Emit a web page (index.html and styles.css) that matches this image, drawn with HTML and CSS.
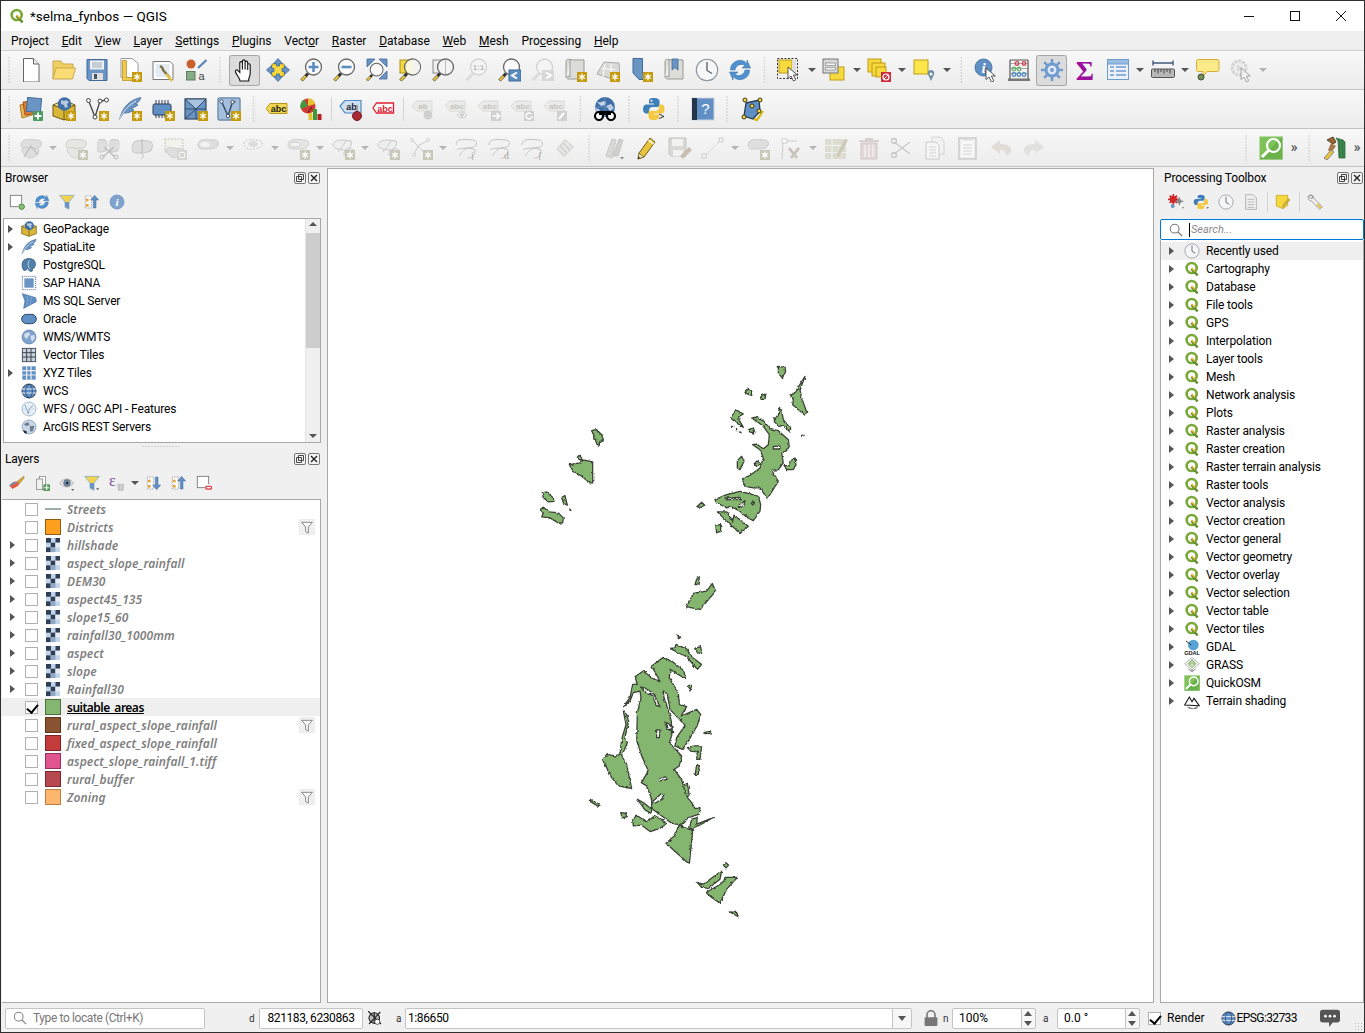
FILE: index.html
```html
<!DOCTYPE html>
<html lang="en">
<head>
  <meta charset="UTF-8">
  <title>*selma_fynbos — QGIS</title>
  <link rel="stylesheet" href="styles.css">
</head>
<body>

<!-- shared icon parts -->
<svg class="defs" width="0" height="0">
  <defs>
    <filter id="rough" x="-5%" y="-5%" width="110%" height="110%" color-interpolation-filters="sRGB">
      <feTurbulence type="fractalNoise" baseFrequency=".09" numOctaves="2" seed="4"/>
      <feDisplacementMap in="SourceGraphic" scale="9" xChannelSelector="R" yChannelSelector="G"/>
      <feGaussianBlur stdDeviation="1.200"/>
    </filter>
    <g id="badge"><rect x="14" y="14" width="10" height="10" fill="#c49b0b"/><path d="M19 15.500v7M16 17.200l6 3.600M22 17.200l-6 3.600" stroke="#fff" stroke-width="1.300"/></g>
    <g id="badge-off"><rect x="14" y="14" width="10" height="10" fill="#c9c7b8"/><path d="M19 15.500v7M16 17.200l6 3.600M22 17.200l-6 3.600" stroke="#fff" stroke-width="1.300"/></g>
    <g id="lens"><path d="M2.500 22.500L9 15.500" stroke="#333" stroke-width="3.200"/><path d="M2.800 22.200L6.500 18" stroke="#e6c33f" stroke-width="2.400"/><circle cx="14.500" cy="9" r="8" fill="#fff" fill-opacity=".7" stroke="#666" stroke-width="1.300"/></g>
    <g id="lens-off"><path d="M2.500 22.500L9 15.500" stroke="#ddd" stroke-width="3.200"/><circle cx="14.500" cy="9" r="8" fill="#f4f4f4" stroke="#d2d2d2" stroke-width="1.300"/></g>
    <g id="new"><path d="M4.500 .5h10l5.500 5.500v18h-15.500z" fill="#fff" stroke="#666"/><path d="M14.500 .5v5.500h5.500" fill="#eee" stroke="#666"/></g>
    <g id="open"><path d="M1 21V3h8l2 3h10v5" fill="#f0cf62" stroke="#c9a94c"/><path d="M1 21l3-11h19.500l-3 11z" fill="#fbdc74" stroke="#c9a94c"/></g>
    <g id="save"><path d="M2 1.500h20v21H4l-2-2z" fill="#6a94c4" stroke="#3f6a9a"/><rect x="5" y="2.500" width="14" height="9" fill="#f0f0f0"/><path d="M7 5h10M7 7h10M7 9h10" stroke="#9ab" /><rect x="7" y="15" width="11" height="7" fill="#dfdfdf"/><rect x="9" y="16" width="3" height="5" fill="#456"/></g>
    <g id="layout"><path d="M3 .5h11l6 5v14h-17z" fill="#fff" stroke="#999"/><path d="M4.500 2.500h4v17h10v3h-14z" fill="#efc94c" stroke="#b8962a" stroke-width=".8"/><use href="#badge"/></g>
    <g id="manager"><path d="M2 3.500h17l3 3v15h-20z" fill="#fff" stroke="#777"/><rect x="4.500" y="6" width="14" height="13" fill="#e3eaf2"/><path d="M9 8c2 1 3 3 3 4l7 8" stroke="#807040" stroke-width="2.400" fill="none"/><path d="M15 16l6 7" stroke="#e6c33f" stroke-width="2.400"/></g>
    <g id="style"><circle cx="7" cy="6" r="4.500" fill="#c9602d"/><rect x="2.500" y="13.500" width="8.500" height="8.500" fill="#86ad88" stroke="#5c7c5c"/><path d="M14 10l8.500-8" stroke="#5f87b8" stroke-width="2.400"/><text x="14.500" y="22" class="svg-a">a</text></g>
    <g id="pan"><path d="M6.500 21C5 18 3 16 2.500 14c-.5-1.600 1-2.700 2.200-1.600L6.800 14.500V5c0-1.800 2.600-1.800 2.600 0v6.500V3.200c0-1.800 2.700-1.800 2.700 0v8.300V4.500c0-1.800 2.600-1.800 2.600 0v7.500V7c0-1.700 2.500-1.700 2.500 0v8c0 3-1 4-1.500 6v2H7z" fill="#fff" stroke="#111" stroke-width="1.100"/></g>
    <g id="pansel"><rect x="6" y="6" width="12" height="12" fill="#f5d93d" stroke="#bf9b16"/><path d="M12 .5l4.500 5h-3v2.500h-3V5.500h-3zM12 23.500l4.500-5h-3V16h-3v2.500h-3zM.5 12l5-4.500v3H8v3H5.500v3zM23.500 12l-5-4.500v3H16v3h2.500v3z" fill="#6a94c4" stroke="#3f6a9a" stroke-width=".8"/></g>
    <g id="zin"><use href="#lens"/><path d="M14.500 4v10M9.500 9h10" stroke="#5a8cc0" stroke-width="2.600"/></g>
    <g id="zout"><use href="#lens"/><path d="M9.500 9h10" stroke="#5a8cc0" stroke-width="2.600"/></g>
    <g id="zfull"><path d="M2 1h8L2 9zM22 1h-8l8 8zM22 21h-8l8-8z" fill="#6a94c4" stroke="#3f6a9a" stroke-width=".8"/><use href="#lens" transform="translate(0 4.500) scale(.8)"/></g>
    <g id="zlayer"><rect x="2" y="2" width="13" height="13" fill="#f5d93d" stroke="#a88f20"/><path d="M2.500 22.500L9 15.500" stroke="#333" stroke-width="3.200"/><path d="M2.800 22.200L6.500 18" stroke="#e6c33f" stroke-width="2.400"/><circle cx="14.500" cy="9" r="8" fill="#fbf6dc" stroke="#666" stroke-width="1.300"/><path d="M14.500 1.500a7.500 7.500 0 0 1 0 15z" fill="#f3f3f3"/></g>
    <g id="zsel"><rect x="2" y="2" width="13" height="13" fill="#eee" stroke="#888"/><path d="M2.500 22.500L9 15.500" stroke="#333" stroke-width="3.200"/><path d="M2.800 22.200L6.500 18" stroke="#e6c33f" stroke-width="2.400"/><circle cx="14.500" cy="9" r="8" fill="#f3f3f3" stroke="#666" stroke-width="1.300"/><path d="M14.500 1.500v15" stroke="#bbb"/></g>
    <g id="z11"><use href="#lens-off"/><text x="14.500" y="12" class="svg-11">1:1</text></g>
    <g id="zlast"><use href="#lens"/><rect x="12" y="12" width="12" height="11" fill="#5a8cc0" stroke="#3f6a9a"/><path d="M20 14.500l-5 3 5 3" stroke="#fff" stroke-width="2" fill="none"/></g>
    <g id="znext"><use href="#lens-off"/><rect x="12" y="12" width="12" height="11" fill="#d8d8d8"/><path d="M16 14.500l5 3-5 3" stroke="#fff" stroke-width="2" fill="none"/></g>
    <g id="scroll"><path d="M3 3.500c0-2 2-2.500 4-2 4 1 9 0 14 .5v19H6c-2 0-3-1-3-2.500z" fill="#dcdcd8" stroke="#9a9a94"/><path d="M7 2v17c-1-1-4-1-4 0" fill="#efefec" stroke="#9a9a94"/></g>
    <g id="newmap"><use href="#scroll"/><use href="#badge"/></g>
    <g id="map3d"><path d="M1 16L8 4l15 1 1 13-8 3z" fill="#d9d9d6" stroke="#aaa"/><path d="M5 10l14 2M9 6l-2 13M15 6l0 14" stroke="#fff"/><use href="#badge"/></g>
    <g id="bmark"><path d="M4 .5h9.500V15l6 6.500H10L4 15z" fill="#6a94c4" stroke="#3f6a9a"/><use href="#badge"/></g>
    <g id="bmarks"><use href="#scroll"/><path d="M10 1h6v11l-3-2.500L10 12z" fill="#6a94c4" stroke="#3f6a9a" stroke-width=".8"/></g>
    <g id="clock"><circle cx="12" cy="12" r="10.700" fill="#f4f6f8" stroke="#8a949c" stroke-width="1.100"/><path d="M12 4v8.500l5 3" stroke="#55606a" stroke-width="1.300" fill="none"/></g>
    <g id="refresh"><path d="M2.500 12A9.500 9.500 0 0 1 19 5.500V2l3.500 8h-8.500l3-2.500A6.500 6.500 0 0 0 7 12z" fill="#4f90cf" stroke="#3d76ad" stroke-width=".6"/><path d="M21.500 12A9.500 9.500 0 0 1 5 18.500V22l-3.500-8H10l-3 2.500A6.500 6.500 0 0 0 17 12z" fill="#4f90cf" stroke="#3d76ad" stroke-width=".6"/></g>
    <g id="cursor"><path d="M0 0v11.500l3-2.500 2.500 5 2.300-1.200L5.300 8h4z" fill="#fff" stroke="#444" stroke-width=".9"/></g>
    <g id="sel"><rect x=".5" y=".5" width="20" height="20" fill="none" stroke="#333" stroke-dasharray="2 1.500"/><rect x="2" y="2" width="13" height="13" fill="#f5d93d" stroke="#bf9b16"/><rect x="15" y="2" width="4" height="17" fill="#dedede"/><use href="#cursor" x="11" y="9"/></g>
    <g id="selform"><rect x="8" y="9" width="14" height="13" fill="#f5d93d" stroke="#bf9b16"/><rect x="1" y="1" width="15" height="14" fill="#d8d8d8" stroke="#777"/><path d="M3.500 5h10v2.500h-10zM3.500 9.500h10v2.500h-10z" fill="#f4f4f4" stroke="#777" stroke-width=".6"/></g>
    <g id="desel"><rect x="1" y="1" width="13" height="13" fill="#f5d93d" stroke="#bf9b16"/><rect x="5" y="5" width="13" height="13" fill="#f5d93d" stroke="#bf9b16"/><rect x="9" y="9" width="10" height="10" fill="#f5d93d" stroke="#bf9b16"/><rect x="14" y="14" width="10" height="10" fill="#cc2c3c"/><circle cx="19" cy="19" r="3" fill="none" stroke="#fff" stroke-width="1.200"/><path d="M17 21l4-4" stroke="#fff"/></g>
    <g id="selpin"><rect x="2" y="2" width="14" height="14" fill="#fde74c" stroke="#bf9b16"/><path d="M19 12c-3.500 0-4 4-2.500 5.500L19 23l2.500-5.500C23 16 22.500 12 19 12z" fill="#6d8ea5"/><circle cx="19" cy="16" r="1.500" fill="#fff"/></g>
    <g id="identify"><circle cx="9.500" cy="9.500" r="8.500" fill="#5f8fc4" stroke="#4a78aa"/><text x="9.500" y="15" class="svg-i">i</text><use href="#cursor" x="12" y="10"/></g>
    <g id="abacus"><path d="M3 2h18M3 2v19M21 2v19M1 22h22" stroke="#555" stroke-width="1.200" fill="none"/><rect x="1" y="20.500" width="22" height="2.500" fill="#777"/><path d="M3 5.500h18M3 10.500h18M3 15.500h18" stroke="#888" stroke-width=".7"/><g fill="none" stroke-width="1.300"><g stroke="#d6394a"><circle cx="10" cy="5.500" r="1.800"/><circle cx="17" cy="5.500" r="1.800"/></g><g stroke="#66b36b"><circle cx="7" cy="11" r="1.800"/><circle cx="12" cy="11" r="1.800"/></g><g stroke="#4a86c0"><circle cx="7" cy="16.500" r="1.800"/><circle cx="12" cy="16.500" r="1.800"/><circle cx="17" cy="16.500" r="1.800"/></g></g></g>
    <g id="gear"><circle cx="12" cy="12" r="6" fill="#dfe8f3" stroke="#6f9bd0" stroke-width="3"/><circle cx="12" cy="12" r="2" fill="#6f9bd0"/><path d="M12 1v5M12 18v5M1 12h5M18 12h5M4.200 4.200l3.600 3.600M16.200 16.200l3.600 3.600M4.200 19.800l3.600-3.600M16.200 7.800l3.600-3.600" stroke="#6f9bd0" stroke-width="2.600"/></g>
    <g id="sigma"><text x="12" y="22" class="svg-sigma">Σ</text></g>
    <g id="table"><rect x="1.500" y="1.500" width="21" height="20" fill="#eaf1fa" stroke="#6f9bd0"/><rect x="1.500" y="1.500" width="21" height="4.500" fill="#9cbde2" stroke="#6f9bd0"/><path d="M4 9h4M10 9h10M4 13h4M10 13h10M4 17h4M10 17h10" stroke="#6f9bd0" stroke-width="1.300"/></g>
    <g id="ruler"><path d="M2 5h20M2 2.500v5M22 2.500v5" stroke="#40597a" stroke-width="1.400" fill="none"/><rect x=".5" y="11" width="23" height="8.500" rx="1" fill="#b8b8b8" stroke="#555"/><path d="M4 11v3M7 11v4.500M10 11v3M13 11v4.500M16 11v3M19 11v4.500" stroke="#444"/></g>
    <g id="tip"><path d="M2 1.500h19a2 2 0 0 1 2 2v8a2 2 0 0 1-2 2H11l-4 5v-5H2a1.500 1.500 0 0 1-1.500-2v-8a1.500 1.500 0 0 1 1.500-2z" fill="#fce98a" stroke="#d6ad2e"/><circle cx="5" cy="19" r="3" fill="#71944f" stroke="#444"/></g>
    <g id="tour"><circle cx="10" cy="10" r="7" fill="#eee" stroke="#d4d4d4" stroke-width="3" stroke-dasharray="3 1"/><path d="M8 6.500l6 3.500-6 3.500z" fill="#d8d8d8"/><use href="#cursor" x="12" y="10" opacity=".5"/></g>
    <g id="dsm"><path d="M1 8l13-3 2 12-13 4z" fill="#e9b451" stroke="#a87d25"/><path d="M4 5l13-1 2 12-13 2z" fill="#dc7a3a" stroke="#a2521e"/><rect x="8" y="1" width="14" height="14" transform="rotate(5 15 8)" fill="#6a94c4" stroke="#3f6a9a"/><rect x="14" y="14" width="10" height="10" rx="1" fill="#4d9a62"/><path d="M19 15.500v7M15.500 19h7" stroke="#fff" stroke-width="1.800"/></g>
    <g id="gpkg-base"><path d="M1 8l11 4 11-4v11l-11 4-11-4z" fill="#d9b638" stroke="#6e5a0f"/><path d="M12 12v11" stroke="#6e5a0f"/><path d="M1 8l11-5 11 5-11 4z" fill="#efe6a4" stroke="#6e5a0f"/><circle cx="12.500" cy="7" r="6.800" fill="#3f6fa6"/><path d="M9 3l3 1 2-1 3 2-2 2 1 3-3 1-1-3-3-1z" fill="#b7c9de"/></g>
    <g id="gpkg"><use href="#gpkg-base"/><use href="#badge"/></g>
    <g id="vertex-base"><path d="M3.500 3.500L10 20l5-16 7-1" fill="none" stroke="#444" stroke-width="1.300"/><circle cx="3.500" cy="3.500" r="2" fill="#fff" stroke="#444"/><circle cx="15" cy="4" r="2" fill="#fff" stroke="#444"/><circle cx="21.500" cy="3" r="2" fill="#fff" stroke="#444"/><circle cx="10" cy="20" r="2" fill="#fff" stroke="#444"/></g>
    <g id="vertex"><use href="#vertex-base"/><use href="#badge"/></g>
    <g id="feather-base"><path d="M1.500 22.500C4 12 10 3 23 .5 21 5 20 6 17 7l3 1c-3 2-5 3-7 3l3 2c-4 3-8 3-10.500 3z" fill="#6c94c2" stroke="#466f9e" stroke-width=".8"/><path d="M1.500 22.500C5 14 11 8 18 4" stroke="#dfe8f2" fill="none"/></g>
    <g id="feather"><use href="#feather-base"/><use href="#badge"/></g>
    <g id="chip"><rect x="2" y="7" width="18" height="11" rx="1.500" fill="#5f8fc4" stroke="#2f3f55"/><path d="M5 3v4M8 3v4M11 3v4M14 3v4M17 3v4M5 18v3M8 18v3M11 18v3M14 18v3" stroke="#2f3f55"/><use href="#badge"/></g>
    <g id="mesh"><rect x="1" y="2" width="21" height="20" fill="#6a94c4" stroke="#2f4a68" stroke-width="1.200"/><path d="M1 22l11-10M12 12v10M1 12h21M12 2v10" stroke="#2f4a68" fill="none"/><path d="M1 2h21L12 12z" fill="#a8c2df" stroke="#2f4a68"/><use href="#badge"/></g>
    <g id="virtual"><rect x="1" y="1" width="22" height="22" rx="1.500" fill="#a6bfdc" stroke="#6b8cb0" stroke-width="1.400"/><path d="M4.500 4.500L11 19l4.500-14 3-.5" fill="none" stroke="#34506e" stroke-width="1.500"/><circle cx="4.500" cy="4.500" r="1.700" fill="#fff" stroke="#34506e"/><circle cx="15.500" cy="5" r="1.700" fill="#fff" stroke="#34506e"/><circle cx="11" cy="19" r="1.700" fill="#fff" stroke="#34506e"/><use href="#badge"/></g>
    <g id="labyel"><path d="M0 11.500L4 6.500h17v10H4z" fill="#f3d650" stroke="#b8951a"/><text x="12.500" y="14.500" class="svg-abc">abc</text></g>
    <g id="diagram"><circle cx="9" cy="9" r="7.500" fill="#d43830"/><path d="M9 9V1.500A7.500 7.500 0 0 1 16.200 7z" fill="#e8c42e"/><path d="M9 9L2 12A7.500 7.500 0 0 1 5 2.500z" fill="#3f9a3f"/><path d="M9 15.500L13 10" stroke="#222"/><rect x="9.500" y="16" width="4" height="7" fill="#e8c42e"/><rect x="14" y="12" width="4" height="11" fill="#3f9a3f"/><rect x="18.500" y="17" width="4" height="6" fill="#b82020"/></g>
    <g id="labpin"><path d="M1 9L6 3.500h16V16H6z" fill="#cfe0f3" stroke="#4f8ac4" stroke-width="1.200"/><text x="12.500" y="12.500" class="svg-ab">ab</text><path d="M18 8v9" stroke="#999" stroke-width="2"/><circle cx="18" cy="19" r="4.500" fill="#a82a35" stroke="#7a1a22"/></g>
    <g id="labred"><path d="M1 11L4.500 6h17v10h-17z" fill="#fff" stroke="#e02030" stroke-width="1.300"/><text x="13" y="14.500" class="svg-abr">abc</text></g>
    <g id="lab-off"><path d="M1 9L6 4h15v10H6z" fill="#ebebe8" stroke="#d8d8d4"/><text x="13" y="12" class="svg-abo">abc</text></g>
    <g id="laboff1"><path d="M1 9L6 4h15v10H6z" fill="#ebebe8" stroke="#d8d8d4"/><text x="12" y="12" class="svg-abo">ab</text><circle cx="17" cy="18" r="4.500" fill="#cfcfcf"/></g>
    <g id="laboff2"><use href="#lab-off"/><path d="M13 18c3-4 7-4 10 0-3 4-7 4-10 0z" fill="#eee" stroke="#ccc"/><circle cx="18" cy="18" r="1.800" fill="#ccc"/></g>
    <g id="laboff3"><use href="#lab-off"/><rect x="14" y="14" width="10" height="10" fill="#d0d0d0"/><path d="M15.500 19h7m-3-3l3 3-3 3" stroke="#fff" stroke-width="1.500" fill="none"/></g>
    <g id="laboff4"><use href="#lab-off"/><rect x="14" y="14" width="10" height="10" fill="#d0d0d0"/><path d="M22 19a3 3 0 1 1-1-2.300" stroke="#fff" stroke-width="1.400" fill="none"/></g>
    <g id="laboff5"><use href="#lab-off"/><rect x="14" y="14" width="10" height="10" fill="#d0d0d0"/><path d="M16 22l5-6" stroke="#fff" stroke-width="2"/></g>
    <g id="binoc"><circle cx="12" cy="10" r="10" fill="#3f6fa6"/><path d="M4 5c3 0 4 1 6-1l3 1-1 3-4 1zM13 9l5-2 3 4-4 3zM2 11l4 1 1 2-3 1z" fill="#c5d4e6"/><path d="M2 10h20M12 0v20" stroke="#84a4c8" stroke-width=".5"/><circle cx="6" cy="19" r="4" fill="#fff" stroke="#000" stroke-width="2.200"/><circle cx="18" cy="19" r="4" fill="#fff" stroke="#000" stroke-width="2.200"/><path d="M6 14h12v4H6z" fill="#000"/></g>
    <g id="python"><path d="M11.500 1C7.500 1 7 2.500 7 4v2.500h5v1H4.500C2.500 7.500 1 9 1 12s1.500 4.500 3.500 4.500H7v-3c0-2 1.500-3.500 3.500-3.500h4.500c1.500 0 2.500-1 2.500-2.500V4c0-1.500-1.500-3-6-3z" fill="#3d7fb8"/><circle cx="9.500" cy="3.800" r="1" fill="#fff"/><path d="M11.500 23c4 0 5.500-1.500 5.500-3v-2.500h-5v-1h7.500c2 0 3-1.500 3-4.500s-1-4.500-3-4.500H17v3c0 2-1.500 3.500-3.500 3.500H9C7.500 13 6.500 14 6.500 15.500V20c0 1.500 1 3 5 3z" fill="#f4c93f"/><path d="M17 17l5 2.500-5 2" fill="none" stroke="#333"/></g>
    <g id="python-s"><path d="M11.500 1C7.500 1 7 2.500 7 4v2.500h5v1H4.500C2.500 7.500 1 9 1 12s1.500 4.500 3.500 4.500H7v-3c0-2 1.500-3.500 3.500-3.500h4.500c1.500 0 2.500-1 2.500-2.500V4c0-1.500-1.500-3-6-3z" fill="#3d7fb8"/><path d="M11.500 23c4 0 5.500-1.500 5.500-3v-2.500h-5v-1h7.500c2 0 3-1.500 3-4.500s-1-4.500-3-4.500H17v3c0 2-1.500 3.500-3.500 3.500H9C7.500 13 6.500 14 6.500 15.500V20c0 1.500 1 3 5 3z" fill="#f4c93f"/><path d="M20 20l2 2 2-2z" fill="#555"/></g>
    <g id="help"><rect x="1" y="1" width="22" height="22" fill="#5f8fc4" stroke="#c9d3de"/><rect x="1" y="1" width="5" height="22" fill="#26364a"/><text x="14.500" y="17" class="svg-help">?</text></g>
    <g id="digitize"><path d="M6 6l13-3 1 11-7 8-9-3z" fill="#5f8fc4" stroke="#2a3a4e" stroke-width="1.300"/><path d="M14 22l3 1 6-9" fill="none" stroke="#d6b600" stroke-width="2.200"/><g fill="#f5d93d" stroke="#3a3a1a"><circle cx="5" cy="3" r="2"/><circle cx="20" cy="3" r="2"/><circle cx="12" cy="9" r="2"/><circle cx="19" cy="14" r="2"/><circle cx="4" cy="20" r="2"/></g></g>
    <path id="blob" d="M2 9C2 4 7 3 12 3.500S23 3 22.500 8 15 13 11 13 2 14 2 9z"/>
    <path id="blob2" d="M3 14c0-3 5-3 8-2s9-1 9 3-6 7-9 7-8-5-8-8z"/>
    <g id="d-split"><use href="#blob" class="off"/><use href="#blob2" class="off"/><path d="M5 21l7-11 7 9" fill="none" stroke="#bbb" stroke-width="1.200"/></g>
    <g id="d-badge"><use href="#blob" class="off2"/><use href="#blob2" class="off2"/><use href="#badge-off"/></g>
    <g id="d-scissor"><use href="#blob" transform="translate(-1 -1) scale(.5 1.300)" class="off"/><use href="#blob" transform="translate(11 -1) scale(.5 1.300)" class="off"/><path d="M6 21l11-10M18 21L7 11" stroke="#bbb" stroke-width="1.200"/><circle cx="5" cy="21" r="2" fill="none" stroke="#bbb"/><circle cx="19" cy="21" r="2" fill="none" stroke="#bbb"/></g>
    <g id="d-merge"><use href="#blob" transform="scale(1 1.300)" class="off"/><path d="M12 3v9c3 2-3 4 0 6s0 4-1 5" stroke="#bbb" fill="none"/></g>
    <g id="d-part"><path d="M2 3h18v13H2z" fill="#f2f2ec" stroke="#c9c7b8" stroke-dasharray="2 1"/><use href="#blob2" class="off"/><rect x="14" y="14" width="10" height="10" fill="#d5d5d0"/><circle cx="19" cy="19" r="3" fill="none" stroke="#fff"/></g>
    <g id="d-ring"><use href="#blob" class="off"/><ellipse cx="9" cy="8.500" rx="5" ry="2.500" fill="#f4f4f4"/></g>
    <g id="d-dash"><path d="M3 8C3 4 8 3 12 4s9-1 9 4-6 4-9 5-9-1-9-5z" fill="#f4f4f4" stroke="#c6c6c6" stroke-dasharray="2 1.500"/><ellipse cx="12" cy="8" rx="5" ry="3" fill="#ddd"/></g>
    <g id="d-ringb"><use href="#blob" class="off2"/><ellipse cx="9" cy="8.500" rx="5" ry="2.500" fill="#f4f4f4" stroke="#ccc"/><use href="#badge-off"/></g>
    <g id="d-two"><path d="M2 9c0-4 6-5 10-5l8 1c2 3-2 9-6 9s-12-1-12-5z" fill="#eee" stroke="#c8c8c8"/><path d="M7 16L16 4" stroke="#ccc"/><path d="M13 16c3-3 8-5 9-2s-2 6-9 5z" fill="#f4f4f4" stroke="#c8c8c8"/></g>
    <g id="d-twob"><use href="#d-two"/><use href="#badge-off"/></g>
    <g id="d-vtx"><path d="M3 4l6 6-4 9M9 10l10-6M9 10l8 9" stroke="#ccc" fill="none"/><circle cx="3" cy="4" r="1.500" fill="#fff" stroke="#ccc"/><circle cx="19" cy="4" r="1.500" fill="#fff" stroke="#ccc"/><circle cx="5" cy="19" r="1.500" fill="#fff" stroke="#ccc"/><use href="#badge-off"/></g>
    <g id="d-reshape"><path d="M2 9C2 4 7 3 12 3.500S23 3 22.500 8c-.5 4-6 3-9 4-3 1-8 6-8 8" fill="#f2f2f2" stroke="#c4c4c4"/><path d="M3 14c1-2 14-3 18 0 0 6-3 8-7 8" fill="none" stroke="#c4c4c4"/></g>
    <g id="d-j"><use href="#d-reshape"/><text x="17" y="23" class="svg-d">j</text></g>
    <g id="d-d"><use href="#d-reshape"/><text x="17" y="23" class="svg-d">d</text></g>
    <g id="d-f"><use href="#d-reshape"/><text x="18" y="23" class="svg-d">ʃ</text></g>
    <g id="d-offset"><path d="M3 13l9-10 9 8-10 10z" fill="#d8d8d4"/><path d="M6 12l6 6M9 9l6 6M12 6l6 6" stroke="#f4f4f4" stroke-width="1.200"/></g>
    <g id="d-pencils"><path d="M4 20L10 3l4 1-4 18z" fill="#d8d8d4" stroke="#c8c8c4"/><path d="M11 20L17 3l4 1-5 16z" fill="#d0d0cc" stroke="#c8c8c4"/><path d="M18 21l4 0-2 2.500z" fill="#888"/></g>
    <g id="pencil"><path d="M3 23l1-6L15 2l5 4-11 15z" fill="#e8c43c" stroke="#6e5f1c"/><path d="M3 23l1-6 5 4z" fill="#e8dcb0" stroke="#6e5f1c" stroke-width=".7"/><path d="M3 23l.4-2.500 2 1.500z" fill="#333"/><path d="M13.500 4l5 4" stroke="#fff" stroke-width="1.500"/></g>
    <g id="d-savee"><path d="M1 2h17v18H3l-2-2z" fill="#d8d8d4" stroke="#c4c4c0"/><rect x="4" y="3" width="11" height="7" fill="#f2f2f0"/><rect x="5" y="14" width="10" height="6" fill="#f2f2f0"/><path d="M12 20l9-9 3 3-9 9z" fill="#c8bdb0"/></g>
    <g id="d-line"><path d="M4 20L20 4" stroke="#d0d0d0" stroke-dasharray="3 1"/><rect x="1" y="18" width="4" height="4" fill="#f4f4f4" stroke="#ccc"/><rect x="18" y="2" width="4" height="4" fill="#f4f4f4" stroke="#ccc"/></g>
    <g id="d-ringbb"><use href="#blob" class="off"/><use href="#badge-off"/></g>
    <g id="d-tool"><path d="M3 3h5v4H3z" fill="#fff" stroke="#ccc"/><path d="M8 5h10M4 7l-1 16" stroke="#ccc"/><path d="M10 12l8 10M20 12l-8 10" stroke="#c8c2b8" stroke-width="2.800"/></g>
    <g id="d-attr"><rect x="1" y="3" width="21" height="6" fill="#dcdcd0"/><rect x="1" y="10" width="21" height="6" fill="#dcdcd0"/><rect x="1" y="17" width="21" height="6" fill="#dcdcd0"/><path d="M8 3v20" stroke="#f4f4f4"/><path d="M12 20L21 3l3 1-9 17z" fill="#cfc8b8"/></g>
    <g id="d-trash"><path d="M2 4h20v2H2zM8 2h8v2H8z" fill="#d8cfcf"/><path d="M4 7h16v16H4z" fill="#e2d8d8" stroke="#cfc6c6"/><path d="M8 9v12M12 9v12M16 9v12" stroke="#f4f0f0" stroke-width="1.400"/></g>
    <g id="d-cut"><path d="M4 6l16 12M4 18L20 6" stroke="#c8c8c8" stroke-width="1.200"/><circle cx="4" cy="5" r="2.500" fill="none" stroke="#c8c8c8" stroke-width="1.400"/><circle cx="4" cy="19" r="2.500" fill="none" stroke="#c8c8c8" stroke-width="1.400"/></g>
    <g id="d-copy"><path d="M9 1h8l4 4v13H9z" fill="#f2f2f2" stroke="#d2d2d2"/><path d="M3 6h10l3 3v14H3z" fill="#f6f6f6" stroke="#cacaca"/><path d="M6 11h7M6 14h7M6 17h7M6 20h7" stroke="#d2d2d2"/></g>
    <g id="d-paste"><rect x="3" y="2" width="17" height="21" fill="#ececec" stroke="#cacaca" stroke-width="1.400"/><rect x="5" y="5" width="13" height="16" fill="#f8f8f8"/><rect x="8" y="1" width="7" height="3" fill="#d8d8d8"/><path d="M7 9h9M7 12h9M7 15h9M7 18h9" stroke="#d2d2d2"/></g>
    <g id="d-undo"><path d="M11 4L2 11l9 7v-4c4 0 6 1 6 6 3-2 5-3 5-6 0-4-4-6-11-6z" fill="#e1dcd8"/></g>
    <g id="d-redo"><path d="M13 4l9 7-9 7v-4c-4 0-6 1-6 6-3-2-5-3-5-6 0-4 4-6 11-6z" fill="#e1e1de"/></g>
    <g id="osm"><rect x=".5" y=".5" width="23" height="23" fill="#7fc25a"/><path d="M.5 23.500L23.500 .5v23z" fill="#5ea63f" opacity=".6"/><circle cx="14.500" cy="9.500" r="6.500" fill="none" stroke="#fff" stroke-width="2.200"/><path d="M10 14l-7 7" stroke="#fff" stroke-width="3"/></g>
    <g id="hammer"><path d="M14 2l2 3 1 17h6V6l-2-2zM17 4l1 18M20 4l1 18" fill="#3f8a50" stroke="#2f6a3c" stroke-width=".8"/><path d="M5 4l6-3 3 5-3 2z" fill="#9a6a3c" stroke="#5a3c20"/><path d="M9 7l5 3L9 17 6 14z" fill="#a57a4a"/><path d="M2 22l7-8 3 2-7 8z" fill="#e8c43c" stroke="#888"/></g>
    <g id="qlogo"><circle cx="11.500" cy="10.500" r="7.500" fill="#fff" stroke="#7aa83a" stroke-width="4"/><path d="M11 12l9.500 9.500" stroke="#5f8e2a" stroke-width="3.600"/><path d="M11.500 10.500l5 5" stroke="#e7b83a" stroke-width="2.400"/></g>

    <!-- tree and panel icons -->
    <g id="pg"><path d="M4 20c-4-7-3-16 4-17 2-1 6-1 8 0 6 1 7 9 4 13-2 1-3 2-3 5-3 2-6 0-6-5-1 2-4 5-7 4z" fill="#4f7faa" stroke="#2e5374" stroke-width="1.100"/><path d="M13 5c-3 3-3 9 0 13" stroke="#fff" fill="none"/></g>
    <g id="hana"><rect x="5" y="5" width="14" height="14" fill="#6a94c4"/><rect x="2" y="2" width="20" height="20" fill="none" stroke="#4c6c90" stroke-dasharray="1.500 1.500" stroke-width="1.500"/></g>
    <g id="mssql"><path d="M2 1l20 6 1 6-19 10 2-11z" fill="#5f8fc4" stroke="#3f6a9a"/><path d="M10 4l-1 15M16 6l-3 12" stroke="#90b0d4"/></g>
    <g id="oracle"><rect x="1" y="5" width="22" height="14" rx="7" fill="#5f8fc4" stroke="#27405e" stroke-width="1.400"/></g>
    <g id="globe"><circle cx="12" cy="12" r="10.500" fill="#7fa3cc" stroke="#4f76a4"/><path d="M5 7l6-2 3 3-3 3-2 4-4-3zM14 10l6-1 1 5-4 5-2-3z" fill="#d3dfee"/></g>
    <g id="tiles"><rect x="2" y="2" width="20" height="20" fill="#c8d2dd" stroke="#3a4550" stroke-width="1.300"/><path d="M2 8.500h20M2 15h20M8.500 2v20M15 2v20" stroke="#3a4550" stroke-width="1.500"/></g>
    <g id="xyz"><rect x="2" y="2" width="20" height="20" fill="#5f8fc4"/><path d="M2 8.500h20M2 15h20M8.500 2v20M15 2v20" stroke="#f0f0f0" stroke-width="1.800"/></g>
    <g id="wcs"><circle cx="12" cy="12" r="10.500" fill="#5f8fc4" stroke="#22354e" stroke-width="1.300"/><path d="M1.500 9h21M1.500 15h21" stroke="#fff" stroke-width="1.300"/><ellipse cx="12" cy="12" rx="5" ry="10" fill="none" stroke="#22354e"/></g>
    <g id="wfs"><circle cx="12" cy="12" r="10.500" fill="#e8eff7" stroke="#7f9fc4"/><path d="M6 6l5 13 2-8 5-4" fill="none" stroke="#5a7a9c"/><path d="M1.500 12h21" stroke="#c0d0e2"/></g>
    <g id="arcgis"><circle cx="12" cy="12" r="10.500" fill="#c9d6e6" stroke="#6f8fb4"/><path d="M4 8l6-3 3 3-4 3zM13 11l7-1-2 8-4 1z" fill="#6b7a8c"/><path d="M3 17l5 1 1 4-4-1z" fill="#223"/></g>
    <g id="addgrp"><rect x="2" y="2" width="17" height="17" fill="#fff" stroke="#777" stroke-width="1.300"/><rect x="14" y="14" width="10" height="10" fill="#fff"/><circle cx="19" cy="19" r="4.200" fill="#8bbd7a" stroke="#4f8a40" stroke-width="1.500"/></g>
    <g id="filter"><path d="M1 2h22L15 12v11l-6-3v-8z" fill="#f3d24e" stroke="#80a8d0" stroke-width="1.100"/><path d="M9 12h6v10l-6-3z" fill="#6a94c4"/></g>
    <g id="collapse"><rect x="2" y="3" width="9" height="18" fill="#fff" stroke="#888" stroke-dasharray="2 1"/><rect x="3" y="7" width="4" height="4" fill="#e8a53a"/><rect x="3" y="15" width="4" height="4" fill="#e8a53a"/><path d="M16 2l6 7h-4v12h-4V9h-4z" fill="#5f8fc4" stroke="#3f6a9a" stroke-width=".7"/></g>
    <g id="expand"><rect x="2" y="3" width="9" height="18" fill="#fff" stroke="#888" stroke-dasharray="2 1"/><rect x="3" y="7" width="4" height="4" fill="#e8a53a"/><rect x="3" y="15" width="4" height="4" fill="#e8a53a"/><path d="M16 22l6-7h-4V3h-4v12h-4z" fill="#5f8fc4" stroke="#3f6a9a" stroke-width=".7"/></g>
    <g id="info"><circle cx="12" cy="12" r="10.500" fill="#7fa3cc" stroke="#5f88b8"/><text x="12" y="18" class="svg-inf">i</text></g>
    <g id="brush"><path d="M12 10L22 2l1 2-8 10z" fill="#d9a83a" stroke="#8a6a1c" stroke-width=".7"/><path d="M1 16c4-6 10-8 14-4l-1 4-9 5z" fill="#e35a40"/><path d="M1 16c3-3 8-5 11-4" stroke="#6a94c4" stroke-width="2" fill="none"/></g>
    <g id="addlegend"><rect x="8" y="2" width="9" height="18" fill="#fff" stroke="#777"/><rect x="4" y="6" width="9" height="16" fill="#f2f2f2" stroke="#777"/><rect x="14" y="14" width="10" height="10" fill="#5a9c60"/><path d="M19 15.500v7M15.500 19h7" stroke="#fff" stroke-width="1.600"/></g>
    <g id="eye"><path d="M1 12c6-8 15-8 21 0-6 8-15 8-21 0z" fill="#e8e8e8" stroke="#999"/><circle cx="12" cy="12" r="5" fill="#6f90b4" stroke="#555"/><circle cx="12" cy="12" r="2" fill="#223"/><path d="M18 21l5 0-2.500 2.500z" fill="#555"/></g>
    <g id="filter-d"><use href="#filter"/><path d="M18 20l5 0-2.500 2.500z" fill="#555"/></g>
    <g id="eps"><text x="0" y="17" class="svg-eps">ε</text><path d="M13 14h9l-1 9h-7z" fill="#ddd" stroke="#aaa"/><path d="M16 15v7M19 15v7" stroke="#aaa"/></g>
    <g id="remove"><rect x="2" y="2" width="17" height="17" fill="#fff" stroke="#777" stroke-width="1.300"/><rect x="14" y="14" width="10" height="9" fill="#fff"/><rect x="14" y="16" width="10" height="6" rx="1.500" fill="#dd4450"/><rect x="16" y="18" width="6" height="2" fill="#fff"/></g>
    <g id="procgear"><circle cx="8" cy="8" r="5.500" fill="#d02828"/><path d="M8 0v16M0 8h16M2.500 2.500l11 11M2.500 13.500l11-11" stroke="#d02828" stroke-width="2.400"/><circle cx="17" cy="11" r="3.500" fill="#888"/><path d="M17 5v12M11 11h12" stroke="#888" stroke-width="1.800"/><circle cx="7" cy="18" r="3" fill="#6a94c4"/><path d="M21 20l3 0-1.500 2z" fill="#555"/></g>
    <g id="doc"><path d="M4 1h11l5 5v17H4z" fill="#f0f0f0" stroke="#aaa" stroke-width="1.300"/><path d="M7 8h10M7 12h10M7 16h10M7 20h10" stroke="#aaa" stroke-width="1.200"/></g>
    <g id="note"><path d="M2 2h17v15l-7 5-10-4z" fill="#f5d93d" stroke="#bf9b16"/><path d="M11 22l12-13-3-3-9 11z" fill="#c8a83a"/></g>
    <g id="wrench"><path d="M3 2c3-1 7 0 7 4l13 13-4 4L6 10C2 10 1 6 2 3l4 4 3-1 0-3z" fill="#f0f0f0" stroke="#777"/><path d="M15 15l6 6" stroke="#e6c33f" stroke-width="3"/></g>
    <g id="gdal"><circle cx="14" cy="9" r="8" fill="#58a3d6"/><path d="M3 3l8 6" stroke="#333" stroke-width="1.500"/><text x="12" y="23.500" class="svg-gdal">GDAL</text></g>
    <g id="grass"><path d="M12 1l11 9-11 9L1 10z" fill="#fff" stroke="#888"/><path d="M12 4l6 6-6 6-6-6z" fill="#9ac47a" stroke="#5a8a40"/><path d="M12 6v9M8 10l4 4 4-4" stroke="#fff" fill="none"/><path d="M4 17l8 6 8-6-8 3z" fill="#999"/></g>
    <g id="terrain"><path d="M1 18l7-12 4 7 3-5 8 11z" fill="#fff" stroke="#111" stroke-width="1.600"/><path d="M4 20l10 3 9-5-4 6H8z" fill="#888"/></g>
    <g id="funnel"><rect x=".5" y=".5" width="23" height="23" rx="2" fill="#f0f0f0" stroke="#e4e4e4"/><path d="M4 5h16l-6 7v9l-4-2v-7z" fill="#fff" stroke="#777" stroke-width="1.300"/></g>
    <g id="raster"><rect x="0" y="0" width="14" height="14" fill="#c3d3e8"/><rect x="0" y="0" width="5" height="4.700" fill="#2f3f55"/><rect x="9.500" y="0" width="4.500" height="4.700" fill="#2f3f55"/><rect x="4.700" y="4.700" width="4.700" height="4.700" fill="#2f3f55"/><rect x="0" y="9.400" width="4.700" height="4.700" fill="#2f3f55"/><rect x="9.400" y="4.700" width="4.700" height="4.700" fill="#e8eef6"/><rect x="4.700" y="9.400" width="4.700" height="4.700" fill="#8fa8c8"/></g>
    <g id="lock"><path d="M5 10V6a5 5 0 0 1 10 0v4" fill="none" stroke="#777" stroke-width="2"/><rect x="2" y="9" width="16" height="11" rx="1" fill="#777"/></g>
    <g id="bug"><circle cx="11" cy="12" r="7" fill="#bbb" stroke="#222" stroke-width="1.500"/><path d="M3 3l17 17M4 20L19 4M11 4v16" stroke="#222" stroke-width="1.500"/><circle cx="15" cy="17" r="3.500" fill="#fff" stroke="#222"/></g>
    <g id="msg"><path d="M3 2h16a3 3 0 0 1 3 3v8a3 3 0 0 1-3 3h-5l-4 5v-5H3a3 3 0 0 1-3-3V5a3 3 0 0 1 3-3z" fill="#555"/><circle cx="6" cy="9" r="1.500" fill="#fff"/><circle cx="11" cy="9" r="1.500" fill="#fff"/><circle cx="16" cy="9" r="1.500" fill="#fff"/></g>
    <g id="float"><rect x=".5" y=".5" width="11" height="11" rx="1.500" fill="#f4f4f4" stroke="#777"/><path d="M4.500 2.500h5v5h-5zM2.500 4.500h5v5h-5z" fill="none" stroke="#333" stroke-width=".9"/></g>
    <g id="close"><rect x=".5" y=".5" width="11" height="11" rx="1.500" fill="#f4f4f4" stroke="#777"/><path d="M3 3l6 6M9 3L3 9" stroke="#222" stroke-width="1.400"/></g>
  </defs>
</svg>

<div class="window">

  <header class="titlebar">
    <svg class="title-logo" viewBox="0 0 24 24"><use href="#qlogo"/></svg>
    <span class="title-text">*selma_fynbos — QGIS</span>
    <div class="winctl">
      <svg viewBox="0 0 12 12"><path d="M1 6.500h10" stroke="#111" fill="none"/></svg>
      <svg viewBox="0 0 12 12"><rect x="1.500" y="1.500" width="9" height="9" fill="none" stroke="#111"/></svg>
      <svg viewBox="0 0 12 12"><path d="M1 1l10 10M11 1L1 11" stroke="#111" fill="none"/></svg>
    </div>
  </header>

  <nav class="menubar">
    <span>Pro<u>j</u>ect</span><span><u>E</u>dit</span><span><u>V</u>iew</span><span><u>L</u>ayer</span><span><u>S</u>ettings</span><span><u>P</u>lugins</span><span>Vect<u>o</u>r</span><span><u>R</u>aster</span><span><u>D</u>atabase</span><span><u>W</u>eb</span><span><u>M</u>esh</span><span>Pro<u>c</u>essing</span><span><u>H</u>elp</span>
  </nav>

  <div class="toolbar">
    <i class="grip"></i>
    <span class="btn"><svg class="ic" viewBox="0 0 24 24"><use href="#new"/></svg></span>
    <span class="btn"><svg class="ic" viewBox="0 0 24 24"><use href="#open"/></svg></span>
    <span class="btn"><svg class="ic" viewBox="0 0 24 24"><use href="#save"/></svg></span>
    <span class="btn"><svg class="ic" viewBox="0 0 24 24"><use href="#layout"/></svg></span>
    <span class="btn"><svg class="ic" viewBox="0 0 24 24"><use href="#manager"/></svg></span>
    <span class="btn"><svg class="ic" viewBox="0 0 24 24"><use href="#style"/></svg></span>
    <i class="grip"></i>
    <span class="btn active"><svg class="ic" viewBox="0 0 24 24"><use href="#pan"/></svg></span>
    <span class="btn"><svg class="ic" viewBox="0 0 24 24"><use href="#pansel"/></svg></span>
    <span class="btn"><svg class="ic" viewBox="0 0 24 24"><use href="#zin"/></svg></span>
    <span class="btn"><svg class="ic" viewBox="0 0 24 24"><use href="#zout"/></svg></span>
    <span class="btn"><svg class="ic" viewBox="0 0 24 24"><use href="#zfull"/></svg></span>
    <span class="btn"><svg class="ic" viewBox="0 0 24 24"><use href="#zlayer"/></svg></span>
    <span class="btn"><svg class="ic" viewBox="0 0 24 24"><use href="#zsel"/></svg></span>
    <span class="btn"><svg class="ic" viewBox="0 0 24 24"><use href="#z11"/></svg></span>
    <span class="btn"><svg class="ic" viewBox="0 0 24 24"><use href="#zlast"/></svg></span>
    <span class="btn"><svg class="ic" viewBox="0 0 24 24"><use href="#znext"/></svg></span>
    <span class="btn"><svg class="ic" viewBox="0 0 24 24"><use href="#newmap"/></svg></span>
    <span class="btn"><svg class="ic" viewBox="0 0 24 24"><use href="#map3d"/></svg></span>
    <span class="btn"><svg class="ic" viewBox="0 0 24 24"><use href="#bmark"/></svg></span>
    <span class="btn"><svg class="ic" viewBox="0 0 24 24"><use href="#bmarks"/></svg></span>
    <span class="btn"><svg class="ic" viewBox="0 0 24 24"><use href="#clock"/></svg></span>
    <span class="btn"><svg class="ic" viewBox="0 0 24 24"><use href="#refresh"/></svg></span>
    <i class="grip wide"></i>
    <span class="btn"><svg class="ic" viewBox="0 0 24 24"><use href="#sel"/></svg></span><b class="drop"></b>
    <span class="btn"><svg class="ic" viewBox="0 0 24 24"><use href="#selform"/></svg></span><b class="drop"></b>
    <span class="btn"><svg class="ic" viewBox="0 0 24 24"><use href="#desel"/></svg></span><b class="drop"></b>
    <span class="btn"><svg class="ic" viewBox="0 0 24 24"><use href="#selpin"/></svg></span><b class="drop"></b>
    <i class="grip wide"></i>
    <span class="btn"><svg class="ic" viewBox="0 0 24 24"><use href="#identify"/></svg></span>
    <span class="btn"><svg class="ic" viewBox="0 0 24 24"><use href="#abacus"/></svg></span>
    <span class="btn active"><svg class="ic" viewBox="0 0 24 24"><use href="#gear"/></svg></span>
    <span class="btn"><svg class="ic" viewBox="0 0 24 24"><use href="#sigma"/></svg></span>
    <span class="btn"><svg class="ic" viewBox="0 0 24 24"><use href="#table"/></svg></span><b class="drop"></b>
    <span class="btn"><svg class="ic" viewBox="0 0 24 24"><use href="#ruler"/></svg></span><b class="drop"></b>
    <span class="btn"><svg class="ic" viewBox="0 0 24 24"><use href="#tip"/></svg></span>
    <span class="btn"><svg class="ic" viewBox="0 0 24 24"><use href="#tour"/></svg></span><b class="drop off-drop"></b>
  </div>

  <div class="toolbar">
    <i class="grip"></i>
    <span class="btn"><svg class="ic" viewBox="0 0 24 24"><use href="#dsm"/></svg></span>
    <span class="btn"><svg class="ic" viewBox="0 0 24 24"><use href="#gpkg"/></svg></span>
    <span class="btn"><svg class="ic" viewBox="0 0 24 24"><use href="#vertex"/></svg></span>
    <span class="btn"><svg class="ic" viewBox="0 0 24 24"><use href="#feather"/></svg></span>
    <span class="btn"><svg class="ic" viewBox="0 0 24 24"><use href="#chip"/></svg></span>
    <span class="btn"><svg class="ic" viewBox="0 0 24 24"><use href="#mesh"/></svg></span>
    <span class="btn"><svg class="ic" viewBox="0 0 24 24"><use href="#virtual"/></svg></span>
    <i class="grip wide"></i>
    <span class="btn"><svg class="ic" viewBox="0 0 24 24"><use href="#labyel"/></svg></span>
    <span class="btn"><svg class="ic" viewBox="0 0 24 24"><use href="#diagram"/></svg></span>
    <i class="sep"></i>
    <span class="btn"><svg class="ic" viewBox="0 0 24 24"><use href="#labpin"/></svg></span>
    <span class="btn"><svg class="ic" viewBox="0 0 24 24"><use href="#labred"/></svg></span>
    <i class="sep"></i>
    <span class="btn"><svg class="ic" viewBox="0 0 24 24"><use href="#laboff1"/></svg></span>
    <span class="btn"><svg class="ic" viewBox="0 0 24 24"><use href="#laboff2"/></svg></span>
    <span class="btn"><svg class="ic" viewBox="0 0 24 24"><use href="#laboff3"/></svg></span>
    <span class="btn"><svg class="ic" viewBox="0 0 24 24"><use href="#laboff4"/></svg></span>
    <span class="btn"><svg class="ic" viewBox="0 0 24 24"><use href="#laboff5"/></svg></span>
    <i class="grip wide"></i>
    <span class="btn"><svg class="ic" viewBox="0 0 24 24"><use href="#binoc"/></svg></span>
    <i class="grip"></i>
    <span class="btn"><svg class="ic" viewBox="0 0 24 24"><use href="#python"/></svg></span>
    <i class="grip"></i>
    <span class="btn"><svg class="ic" viewBox="0 0 24 24"><use href="#help"/></svg></span>
    <i class="grip"></i>
    <span class="btn"><svg class="ic" viewBox="0 0 24 24"><use href="#digitize"/></svg></span>
  </div>

  <div class="toolbar last">
    <i class="grip"></i>
    <span class="btn"><svg class="ic" viewBox="0 0 24 24"><use href="#d-split"/></svg></span><b class="drop off-drop"></b>
    <span class="btn"><svg class="ic" viewBox="0 0 24 24"><use href="#d-badge"/></svg></span>
    <span class="btn"><svg class="ic" viewBox="0 0 24 24"><use href="#d-scissor"/></svg></span>
    <span class="btn"><svg class="ic" viewBox="0 0 24 24"><use href="#d-merge"/></svg></span>
    <span class="btn"><svg class="ic" viewBox="0 0 24 24"><use href="#d-part"/></svg></span>
    <span class="btn"><svg class="ic" viewBox="0 0 24 24"><use href="#d-ring"/></svg></span><b class="drop off-drop"></b>
    <span class="btn"><svg class="ic" viewBox="0 0 24 24"><use href="#d-dash"/></svg></span><b class="drop off-drop"></b>
    <span class="btn"><svg class="ic" viewBox="0 0 24 24"><use href="#d-ringb"/></svg></span><b class="drop off-drop"></b>
    <span class="btn"><svg class="ic" viewBox="0 0 24 24"><use href="#d-twob"/></svg></span><b class="drop off-drop"></b>
    <span class="btn"><svg class="ic" viewBox="0 0 24 24"><use href="#d-twob"/></svg></span>
    <span class="btn"><svg class="ic" viewBox="0 0 24 24"><use href="#d-vtx"/></svg></span><b class="drop off-drop"></b>
    <span class="btn"><svg class="ic" viewBox="0 0 24 24"><use href="#d-j"/></svg></span>
    <span class="btn"><svg class="ic" viewBox="0 0 24 24"><use href="#d-d"/></svg></span>
    <span class="btn"><svg class="ic" viewBox="0 0 24 24"><use href="#d-f"/></svg></span>
    <span class="btn"><svg class="ic" viewBox="0 0 24 24"><use href="#d-offset"/></svg></span>
    <i class="grip"></i>
    <span class="btn"><svg class="ic" viewBox="0 0 24 24"><use href="#d-pencils"/></svg></span>
    <span class="btn"><svg class="ic" viewBox="0 0 24 24"><use href="#pencil"/></svg></span>
    <span class="btn"><svg class="ic" viewBox="0 0 24 24"><use href="#d-savee"/></svg></span>
    <span class="btn"><svg class="ic" viewBox="0 0 24 24"><use href="#d-line"/></svg></span><b class="drop off-drop"></b>
    <span class="btn"><svg class="ic" viewBox="0 0 24 24"><use href="#d-ringbb"/></svg></span>
    <span class="btn"><svg class="ic" viewBox="0 0 24 24"><use href="#d-tool"/></svg></span><b class="drop off-drop"></b>
    <span class="btn"><svg class="ic" viewBox="0 0 24 24"><use href="#d-attr"/></svg></span>
    <span class="btn"><svg class="ic" viewBox="0 0 24 24"><use href="#d-trash"/></svg></span>
    <span class="btn"><svg class="ic" viewBox="0 0 24 24"><use href="#d-cut"/></svg></span>
    <span class="btn"><svg class="ic" viewBox="0 0 24 24"><use href="#d-copy"/></svg></span>
    <span class="btn"><svg class="ic" viewBox="0 0 24 24"><use href="#d-paste"/></svg></span>
    <span class="btn"><svg class="ic" viewBox="0 0 24 24"><use href="#d-undo"/></svg></span>
    <span class="btn"><svg class="ic" viewBox="0 0 24 24"><use href="#d-redo"/></svg></span>
    <i class="grip push"></i>
    <span class="btn"><svg class="ic" viewBox="0 0 24 24"><use href="#osm"/></svg></span>
    <span class="more">»</span>
    <i class="grip"></i>
    <span class="btn"><svg class="ic" viewBox="0 0 24 24"><use href="#hammer"/></svg></span>
    <span class="more">»</span>
  </div>

  <main class="workspace">

    <aside class="left-dock">
      <section class="panel browser">
        <div class="panel-title">
          <span>Browser</span>
          <svg class="dock-btn" viewBox="0 0 12 12"><use href="#float"/></svg>
          <svg class="dock-btn" viewBox="0 0 12 12"><use href="#close"/></svg>
        </div>
        <div class="panel-tools">
          <span class="pbtn"><svg class="ics" viewBox="0 0 24 24"><use href="#addgrp"/></svg></span>
          <span class="pbtn"><svg class="ics" viewBox="0 0 24 24"><use href="#refresh"/></svg></span>
          <span class="pbtn"><svg class="ics" viewBox="0 0 24 24"><use href="#filter"/></svg></span>
          <span class="pbtn"><svg class="ics" viewBox="0 0 24 24"><use href="#collapse"/></svg></span>
          <span class="pbtn"><svg class="ics" viewBox="0 0 24 24"><use href="#info"/></svg></span>
        </div>
        <div class="browser-tree">
          <ul class="tree">
            <li><i class="arrow"></i><svg class="ics" viewBox="0 0 24 24"><use href="#gpkg-base"/></svg><span>GeoPackage</span></li>
            <li><i class="arrow"></i><svg class="ics" viewBox="0 0 24 24"><use href="#feather-base"/></svg><span>SpatiaLite</span></li>
            <li><i class="noarrow"></i><svg class="ics" viewBox="0 0 24 24"><use href="#pg"/></svg><span>PostgreSQL</span></li>
            <li><i class="noarrow"></i><svg class="ics" viewBox="0 0 24 24"><use href="#hana"/></svg><span>SAP HANA</span></li>
            <li><i class="noarrow"></i><svg class="ics" viewBox="0 0 24 24"><use href="#mssql"/></svg><span>MS SQL Server</span></li>
            <li><i class="noarrow"></i><svg class="ics" viewBox="0 0 24 24"><use href="#oracle"/></svg><span>Oracle</span></li>
            <li><i class="noarrow"></i><svg class="ics" viewBox="0 0 24 24"><use href="#globe"/></svg><span>WMS/WMTS</span></li>
            <li><i class="noarrow"></i><svg class="ics" viewBox="0 0 24 24"><use href="#tiles"/></svg><span>Vector Tiles</span></li>
            <li><i class="arrow"></i><svg class="ics" viewBox="0 0 24 24"><use href="#xyz"/></svg><span>XYZ Tiles</span></li>
            <li><i class="noarrow"></i><svg class="ics" viewBox="0 0 24 24"><use href="#wcs"/></svg><span>WCS</span></li>
            <li><i class="noarrow"></i><svg class="ics" viewBox="0 0 24 24"><use href="#wfs"/></svg><span>WFS / OGC API - Features</span></li>
            <li><i class="noarrow"></i><svg class="ics" viewBox="0 0 24 24"><use href="#arcgis"/></svg><span>ArcGIS REST Servers</span></li>
          </ul>
          <div class="scrollbar">
            <i class="sb-up"></i>
            <i class="sb-thumb"></i>
            <i class="sb-down"></i>
          </div>
        </div>
      </section>

      <div class="splitter"></div>

      <section class="panel layers">
        <div class="panel-title">
          <span>Layers</span>
          <svg class="dock-btn" viewBox="0 0 12 12"><use href="#float"/></svg>
          <svg class="dock-btn" viewBox="0 0 12 12"><use href="#close"/></svg>
        </div>
        <div class="panel-tools">
          <span class="pbtn"><svg class="ics" viewBox="0 0 24 24"><use href="#brush"/></svg></span>
          <span class="pbtn"><svg class="ics" viewBox="0 0 24 24"><use href="#addlegend"/></svg></span>
          <span class="pbtn"><svg class="ics" viewBox="0 0 24 24"><use href="#eye"/></svg></span>
          <span class="pbtn"><svg class="ics" viewBox="0 0 24 24"><use href="#filter-d"/></svg></span>
          <span class="pbtn"><svg class="ics" viewBox="0 0 24 24"><use href="#eps"/></svg></span><b class="drop small"></b>
          <span class="pbtn"><svg class="ics" viewBox="0 0 24 24"><use href="#expand"/></svg></span>
          <span class="pbtn"><svg class="ics" viewBox="0 0 24 24"><use href="#collapse"/></svg></span>
          <span class="pbtn"><svg class="ics" viewBox="0 0 24 24"><use href="#remove"/></svg></span>
        </div>
        <ul class="tree layer-tree">
          <li><i class="noarrow"></i><i class="check"></i><span class="sym"><i class="sym-line"></i></span><span>Streets</span></li>
          <li><i class="noarrow"></i><i class="check"></i><span class="sym"><i class="swatch orange"></i></span><span>Districts</span><svg class="funnel" viewBox="0 0 24 24"><use href="#funnel"/></svg></li>
          <li><i class="arrow"></i><i class="check"></i><svg class="sym" viewBox="-1 -1 16 16"><use href="#raster"/></svg><span>hillshade</span></li>
          <li><i class="arrow"></i><i class="check"></i><svg class="sym" viewBox="-1 -1 16 16"><use href="#raster"/></svg><span>aspect_slope_rainfall</span></li>
          <li><i class="arrow"></i><i class="check"></i><svg class="sym" viewBox="-1 -1 16 16"><use href="#raster"/></svg><span>DEM30</span></li>
          <li><i class="arrow"></i><i class="check"></i><svg class="sym" viewBox="-1 -1 16 16"><use href="#raster"/></svg><span>aspect45_135</span></li>
          <li><i class="arrow"></i><i class="check"></i><svg class="sym" viewBox="-1 -1 16 16"><use href="#raster"/></svg><span>slope15_60</span></li>
          <li><i class="arrow"></i><i class="check"></i><svg class="sym" viewBox="-1 -1 16 16"><use href="#raster"/></svg><span>rainfall30_1000mm</span></li>
          <li><i class="arrow"></i><i class="check"></i><svg class="sym" viewBox="-1 -1 16 16"><use href="#raster"/></svg><span>aspect</span></li>
          <li><i class="arrow"></i><i class="check"></i><svg class="sym" viewBox="-1 -1 16 16"><use href="#raster"/></svg><span>slope</span></li>
          <li><i class="arrow"></i><i class="check"></i><svg class="sym" viewBox="-1 -1 16 16"><use href="#raster"/></svg><span>Rainfall30</span></li>
          <li class="current"><i class="noarrow"></i><i class="check on"></i><span class="sym"><i class="swatch green"></i></span><span>suitable_areas</span></li>
          <li><i class="noarrow"></i><i class="check"></i><span class="sym"><i class="swatch brown"></i></span><span>rural_aspect_slope_rainfall</span><svg class="funnel" viewBox="0 0 24 24"><use href="#funnel"/></svg></li>
          <li><i class="noarrow"></i><i class="check"></i><span class="sym"><i class="swatch red"></i></span><span>fixed_aspect_slope_rainfall</span></li>
          <li><i class="noarrow"></i><i class="check"></i><span class="sym"><i class="swatch pink"></i></span><span>aspect_slope_rainfall_1.tiff</span></li>
          <li><i class="noarrow"></i><i class="check"></i><span class="sym"><i class="swatch rose"></i></span><span>rural_buffer</span></li>
          <li><i class="noarrow"></i><i class="check"></i><span class="sym"><i class="swatch peach"></i></span><span>Zoning</span><svg class="funnel" viewBox="0 0 24 24"><use href="#funnel"/></svg></li>
        </ul>
      </section>
    </aside>

    <section class="map-canvas">
      <svg class="map" viewBox="328 169 825 834" preserveAspectRatio="none">
        <g class="land" filter="url(#rough)" transform="translate(530 355) scale(.33333)">
          <path d="M745 35 765 38 767 50 757 70 745 55Z"/>
          <path d="M825 65 803 100 797 112 782 122 790 135 788 150 805 165 825 182 830 172 815 130 810 105Z"/>
          <path d="M645 113 655 102 665 108 665 122 653 118Z"/>
          <path d="M692 122 707 118 705 135 697 135Z"/>
          <path d="M602 190 618 165 630 172 640 178 626 186 628 197 640 218 620 205Z"/>
          <path d="M735 188 745 182 748 158 755 168 760 195 782 222 780 232 760 213 745 215 733 200Z"/>
          <path fill-rule="evenodd" d="M665 190 680 187 700 198 720 222 745 228 775 255 778 275 770 288 755 295 760 325 745 345 725 347 745 380 712 432 690 400 670 400 645 395 637 375 660 362 690 340 700 310 690 285 668 270 680 268 700 282 715 270 718 240 700 215 680 200ZM730 275 750 275 750 283 730 283Z"/>
          <path d="M780 320 795 310 798 330 790 345 770 345 762 333 778 333Z"/>
          <path d="M655 225 670 220 675 235 660 232Z"/>
          <path d="M622 318 635 305 642 320 630 345 622 340Z"/>
          <path d="M672 328 682 318 690 328 680 335Z"/>
          <path d="M185 228 200 225 215 240 220 255 208 262 208 272 200 268 195 250Z"/>
          <path d="M118 330 150 325 155 315 188 322 188 385 180 385 155 365 130 350Z"/>
          <path d="M142 308 148 302 160 315 148 315Z"/>
          <path d="M36 415 50 412 70 430 72 440 55 442 42 430Z"/>
          <path d="M95 428 105 423 112 452 100 445Z"/>
          <path d="M30 465 40 458 58 472 85 475 100 490 98 505 85 505 60 490 35 487 40 475Z"/>
          <path d="M500 457 515 443 524 452 512 458Z"/>
          <path fill-rule="evenodd" d="M555 435 590 420 630 410 660 418 685 425 692 450 690 470 670 498 650 488 630 470 600 455 590 460 560 445ZM585 430 630 428 632 435 590 435ZM625 455 645 438 640 458Z"/>
          <path d="M668 442 673 446 668 451 664 446Z"/>
          <path d="M562 472 590 472 608 500 612 482 655 515 630 537 580 490Z"/>
          <path d="M557 512 572 510 572 530 560 535Z"/>
          <path d="M605 215h3v3h-3zM617 222h3v3h-3zM630 232h3v3h-3zM816 241h3v3h-3zM120 464h3v3h-3z"/>
        </g>
        <g class="land" filter="url(#rough)" transform="translate(580 570) scale(.33333)">
          <path d="M345 45 352 22 358 25 354 45Z"/>
          <path d="M340 72 380 65 397 42 407 65 360 120 320 112Z"/>
          <path d="M293 196 300 205 295 208Z"/>
          <path d="M270 237 285 235 288 225 320 238 335 262 365 285 352 300 320 262 295 250Z"/>
          <path d="M347 235 362 232 365 252 352 250Z"/>
          <path fill-rule="evenodd" d="M130 412 150 385 158 345 172 345 165 322 190 305 215 325 240 335 215 290 248 265 275 275 312 305 316 328 270 300 268 325 295 370 298 405 320 412 303 440 350 420 362 435 352 468 325 515 307 540 285 530 290 505 315 468 298 450 270 420 262 375 250 365 252 385 272 445 278 490 268 520 305 560 298 590 283 600 305 632 318 680 335 700 345 718 360 715 358 735 325 745 302 768 275 762 215 718 215 690 200 650 184 640 205 605 185 560 170 510 172 430 183 385 180 365 160 370 150 395ZM185 352 205 362 222 375 240 412 228 408 218 378 200 372 186 360ZM230 482 240 482 238 505 230 505ZM255 460 270 465 275 480 262 480ZM237 630 258 622 262 630 240 635ZM215 700 245 672 252 675 245 690 225 702ZM310 648 322 642 328 680 318 682Z"/>
          <path d="M130 425 136 425 146 455 135 505 142 520 125 560 140 585 155 658 115 650 95 625 68 572 80 555 105 560 120 555 125 510 138 465Z"/>
          <path d="M172 690 190 700 218 722 212 732 195 722Z"/>
          <path d="M30 690 58 705 55 712 28 695Z"/>
          <path d="M122 730 135 732 142 742 128 746Z"/>
          <path d="M170 738 180 745 200 758 225 740 262 763 235 780 210 787 185 768 160 770 158 752Z"/>
          <path d="M298 768 338 785 328 885 258 822 283 800Z"/>
          <path d="M335 750 352 745 350 765 400 745 352 772 328 780Z"/>
          <path d="M322 535 345 530 365 530 360 570 350 570 352 545 335 548Z"/>
          <path d="M372 490 392 485 390 492 375 493Z"/>
          <path d="M350 590 358 588 355 615 345 615Z"/>
          <path d="M325 348 335 348 330 365Z"/>
          <path d="M430 888 438 881 446 888 438 896Z"/>
          <path d="M352 940 370 945 425 905 420 930 385 958 365 955Z"/>
          <path d="M378 970 430 940 435 925 472 925 440 960 420 1002 395 985Z"/>
          <path d="M448 1028 470 1030 475 1043Z"/>
        </g>
      </svg>
    </section>

    <aside class="right-dock">
      <div class="panel-title">
        <span>Processing Toolbox</span>
        <svg class="dock-btn" viewBox="0 0 12 12"><use href="#float"/></svg>
        <svg class="dock-btn" viewBox="0 0 12 12"><use href="#close"/></svg>
      </div>
      <div class="panel-tools right-tools">
        <span class="pbtn"><svg class="ics" viewBox="0 0 24 24"><use href="#procgear"/></svg></span>
        <span class="pbtn"><svg class="ics" viewBox="0 0 24 24"><use href="#python-s"/></svg></span>
        <span class="pbtn"><svg class="ics" viewBox="0 0 24 24"><use href="#clock"/></svg></span>
        <span class="pbtn"><svg class="ics" viewBox="0 0 24 24"><use href="#doc"/></svg></span>
        <i class="sep small-sep"></i>
        <span class="pbtn"><svg class="ics" viewBox="0 0 24 24"><use href="#note"/></svg></span>
        <i class="sep small-sep"></i>
        <span class="pbtn"><svg class="ics" viewBox="0 0 24 24"><use href="#wrench"/></svg></span>
      </div>
      <div class="search-box">
        <svg class="search-ic" viewBox="0 0 16 16"><circle cx="6.500" cy="6.500" r="5" fill="none" stroke="#777" stroke-width="1.200"/><path d="M10 10l5 5" stroke="#777" stroke-width="1.400"/></svg>
        <span class="search-text">Search...</span>
      </div>
      <ul class="tree proc-tree">
        <li class="hover"><i class="arrow"></i><svg class="ics" viewBox="0 0 24 24"><use href="#clock"/></svg><span>Recently used</span></li>
        <li><i class="arrow"></i><svg class="ics" viewBox="0 0 24 24"><use href="#qlogo"/></svg><span>Cartography</span></li>
        <li><i class="arrow"></i><svg class="ics" viewBox="0 0 24 24"><use href="#qlogo"/></svg><span>Database</span></li>
        <li><i class="arrow"></i><svg class="ics" viewBox="0 0 24 24"><use href="#qlogo"/></svg><span>File tools</span></li>
        <li><i class="arrow"></i><svg class="ics" viewBox="0 0 24 24"><use href="#qlogo"/></svg><span>GPS</span></li>
        <li><i class="arrow"></i><svg class="ics" viewBox="0 0 24 24"><use href="#qlogo"/></svg><span>Interpolation</span></li>
        <li><i class="arrow"></i><svg class="ics" viewBox="0 0 24 24"><use href="#qlogo"/></svg><span>Layer tools</span></li>
        <li><i class="arrow"></i><svg class="ics" viewBox="0 0 24 24"><use href="#qlogo"/></svg><span>Mesh</span></li>
        <li><i class="arrow"></i><svg class="ics" viewBox="0 0 24 24"><use href="#qlogo"/></svg><span>Network analysis</span></li>
        <li><i class="arrow"></i><svg class="ics" viewBox="0 0 24 24"><use href="#qlogo"/></svg><span>Plots</span></li>
        <li><i class="arrow"></i><svg class="ics" viewBox="0 0 24 24"><use href="#qlogo"/></svg><span>Raster analysis</span></li>
        <li><i class="arrow"></i><svg class="ics" viewBox="0 0 24 24"><use href="#qlogo"/></svg><span>Raster creation</span></li>
        <li><i class="arrow"></i><svg class="ics" viewBox="0 0 24 24"><use href="#qlogo"/></svg><span>Raster terrain analysis</span></li>
        <li><i class="arrow"></i><svg class="ics" viewBox="0 0 24 24"><use href="#qlogo"/></svg><span>Raster tools</span></li>
        <li><i class="arrow"></i><svg class="ics" viewBox="0 0 24 24"><use href="#qlogo"/></svg><span>Vector analysis</span></li>
        <li><i class="arrow"></i><svg class="ics" viewBox="0 0 24 24"><use href="#qlogo"/></svg><span>Vector creation</span></li>
        <li><i class="arrow"></i><svg class="ics" viewBox="0 0 24 24"><use href="#qlogo"/></svg><span>Vector general</span></li>
        <li><i class="arrow"></i><svg class="ics" viewBox="0 0 24 24"><use href="#qlogo"/></svg><span>Vector geometry</span></li>
        <li><i class="arrow"></i><svg class="ics" viewBox="0 0 24 24"><use href="#qlogo"/></svg><span>Vector overlay</span></li>
        <li><i class="arrow"></i><svg class="ics" viewBox="0 0 24 24"><use href="#qlogo"/></svg><span>Vector selection</span></li>
        <li><i class="arrow"></i><svg class="ics" viewBox="0 0 24 24"><use href="#qlogo"/></svg><span>Vector table</span></li>
        <li><i class="arrow"></i><svg class="ics" viewBox="0 0 24 24"><use href="#qlogo"/></svg><span>Vector tiles</span></li>
        <li><i class="arrow"></i><svg class="ics" viewBox="0 0 24 24"><use href="#gdal"/></svg><span>GDAL</span></li>
        <li><i class="arrow"></i><svg class="ics" viewBox="0 0 24 24"><use href="#grass"/></svg><span>GRASS</span></li>
        <li><i class="arrow"></i><svg class="ics" viewBox="0 0 24 24"><use href="#osm"/></svg><span>QuickOSM</span></li>
        <li><i class="arrow"></i><svg class="ics" viewBox="0 0 24 24"><use href="#terrain"/></svg><span>Terrain shading</span></li>
      </ul>
    </aside>
  </main>

  <footer class="statusbar">
    <div class="field locator">
      <svg class="search-ic" viewBox="0 0 16 16"><circle cx="6.500" cy="6.500" r="5" fill="none" stroke="#888" stroke-width="1.200"/><path d="M10 10l5 5" stroke="#888" stroke-width="1.400"/></svg>
      <span>Type to locate (Ctrl+K)</span>
    </div>
    <span class="cut l-coord">d</span>
    <div class="field coord">821183, 6230863</div>
    <svg class="st-ic" viewBox="0 0 24 24"><use href="#bug"/></svg>
    <span class="cut l-scale">a</span>
    <div class="field scale"><span>1:86650</span><b class="combo"><i></i></b></div>
    <svg class="lock" viewBox="0 0 20 20"><use href="#lock"/></svg>
    <span class="cut l-mag">n</span>
    <div class="field spin mag"><span>100%</span><b class="spin-btn"><i></i><i></i></b></div>
    <span class="cut l-rot">a</span>
    <div class="field spin rot"><span>0.0 °</span><b class="spin-btn"><i></i><i></i></b></div>
    <i class="check on render-check"></i>
    <span class="render">Render</span>
    <svg class="st-globe" viewBox="0 0 24 24"><use href="#wcs"/></svg>
    <span class="epsg">EPSG:32733</span>
    <svg class="st-msg" viewBox="0 0 22 22"><use href="#msg"/></svg>
    <i class="size-grip"></i>
  </footer>

</div>
</body>
</html>
```

FILE: styles.css
```css
* { box-sizing: border-box; }

html, body {
  margin: 0;
  padding: 0;
  background: #2a2a2a;
}

body {
  font-family: Roboto, "Noto Sans", sans-serif;
  font-size: 12px;
  color: #000;
  overflow: hidden;
}

.defs { position: absolute; }

.window {
  width: 1365px;
  height: 1033px;
  display: flex;
  flex-direction: column;
  border: 1px solid #2e2e2e;
  background: #f0f0f0;
}

/* title bar */
.titlebar {
  height: 30px;
  background: #fff;
  display: flex;
  align-items: center;
  padding-left: 8px;
  flex: none;
}

.title-logo { width: 16px; height: 16px; margin-right: 5px; }
.title-text { font-size: 13.500px; }

.winctl { margin-left: auto; display: flex; padding-right: 17px; }
.winctl svg { width: 12px; height: 12px; margin-left: 34px; }

/* menu */
.menubar {
  height: 20px;
  flex: none;
  display: flex;
  align-items: center;
  gap: 12.800px;
  padding-left: 10px;
  background: #efefef;
  border-bottom: 1px solid #cfcfcf;
}

/* toolbars */
.toolbar {
  height: 39px;
  flex: none;
  display: flex;
  align-items: center;
  padding-left: 3px;
  background: linear-gradient(#f8f8f8, #ececec);
  border-bottom: 1px solid #c4c4c4;
}

.toolbar.last { height: 38px; }

.btn {
  width: 33px;
  height: 31px;
  flex: none;
  display: flex;
  align-items: center;
  justify-content: center;
  position: relative;
}

.btn.active::after {
  content: "";
  position: absolute;
  left: 1px;
  right: 1px;
  top: 0;
  bottom: 0;
  border: 1px solid #a8a8a8;
  border-radius: 3px;
}
.btn.active { background: linear-gradient(90deg, transparent 1px, #dcdcdc 1px, #dcdcdc 32px, transparent 32px); }

.ic { width: 24px; height: 24px; display: block; }
.ics { width: 16px; height: 16px; display: block; flex: none; }

.grip {
  width: 16px;
  height: 26px;
  flex: none;
  background: radial-gradient(circle, #a9a9a9 .6px, transparent .9px) center / 3px 3px;
  background-clip: content-box;
  padding: 0 6px;
}

.toolbar > .grip:first-child { width: 10px; padding: 0 3px; }
.grip.wide { width: 16.500px; }
.grip.push { margin-left: auto; }

.sep {
  width: 6.500px;
  height: 24px;
  flex: none;
  position: relative;
}
.sep::after {
  content: "";
  position: absolute;
  left: 3px;
  top: 0;
  bottom: 0;
  width: 1px;
  background: #d4d4d4;
}

.drop {
  width: 12px;
  height: 12px;
  flex: none;
  position: relative;
}
.drop::after {
  content: "";
  position: absolute;
  left: 2px;
  top: 4px;
  border: 4px solid transparent;
  border-top: 4px solid #555;
  border-bottom: 0;
}
.drop.off-drop::after { border-top-color: #b4b4b4; }

.more {
  width: 14px;
  flex: none;
  text-align: center;
  color: #444;
  font-size: 15px;
  line-height: 1;
}

/* main area */
.workspace {
  flex: 1;
  min-height: 0;
  display: grid;
  grid-template-columns: 320px 827px 204px;
  gap: 6px;
  background: #f0f0f0;
  border-bottom: 1px solid #f0f0f0;
}

.left-dock, .right-dock {
  display: flex;
  flex-direction: column;
  min-height: 0;
  padding-top: 1px;
}

.panel { display: flex; flex-direction: column; }
.browser { height: 275px; flex: none; }
.layers { flex: 1; min-height: 0; }

.splitter {
  height: 6px;
  flex: none;
  background: radial-gradient(circle, #b5b5b5 .6px, transparent .9px) center / 3px 3px repeat-x;
  margin: 0 140px;
}

.panel-title {
  height: 20px;
  flex: none;
  display: flex;
  align-items: center;
  padding: 0 1px 0 4px;
  letter-spacing: -.15px;
}
.panel-title span { flex: 1; }
.dock-btn { width: 12px; height: 12px; margin-left: 2px; flex: none; }

.panel-tools {
  height: 28px;
  flex: none;
  display: flex;
  align-items: center;
  padding-left: 3px;
}
.pbtn {
  width: 25px;
  height: 24px;
  flex: none;
  display: flex;
  align-items: center;
  justify-content: center;
}
.right-tools { padding-left: 3.500px; }
.small-sep { height: 20px; width: 7px; }
.drop.small { width: 12px; }

/* trees */
.tree {
  list-style: none;
  margin: 0;
  padding: 0;
  flex: 1;
  min-width: 0;
  letter-spacing: -.15px;
}
.tree li {
  height: 18px;
  display: flex;
  align-items: center;
  white-space: nowrap;
  position: relative;
}
.tree li > span:last-of-type { margin-left: 6px; }

.arrow, .noarrow { width: 12px; height: 18px; flex: none; position: relative; }
.arrow::after {
  content: "";
  position: absolute;
  left: 4px;
  top: 5px;
  border: 4px solid transparent;
  border-left: 5px solid #555;
  border-right: 0;
}

.browser-tree {
  flex: none;
  height: 225px;
  margin: 2px 0 0 2px;
  display: flex;
  border: 1px solid #a8a8a8;
  background: #fff;
}
.browser-tree .tree { padding-top: 1px; }
.browser-tree .ics { margin-left: 5px; }

.scrollbar {
  width: 15px;
  flex: none;
  display: flex;
  flex-direction: column;
  background: #f0f0f0;
  border-left: 1px solid #e4e4e4;
}
.sb-up, .sb-down { height: 14px; flex: none; position: relative; }
.sb-up::after, .sb-down::after {
  content: "";
  position: absolute;
  left: 3px;
  border: 4px solid transparent;
}
.sb-up::after { top: 3px; border-top: 0; border-bottom: 4px solid #555; }
.sb-down::after { bottom: 4px; border-bottom: 0; border-top: 4px solid #555; }
.sb-thumb { height: 115px; flex: none; background: #cdcdcd; }
.sb-down { margin-top: auto; }

.layer-tree {
  flex: 1;
  min-height: 0;
  margin: 2px 0 0 1px;
  border: 1px solid #a8a8a8;
  border-width: 1px 1px 1px 0;
  background: #fff;
}
.layer-tree li {
  color: #7f7f7f;
  font-family: "Noto Sans", sans-serif;
  font-style: italic;
  font-weight: 600;
  letter-spacing: .1px;
  padding-left: 3px;
}
.layer-tree .arrow::after { left: 5px; }
.layer-tree .check { margin-left: 8px; }
.layer-tree .sym { margin-left: 7px; }
.layer-tree li.current {
  background: #efefef;
  color: #000;
  font-style: normal;
  font-weight: 600;
  letter-spacing: -.5px;
  text-decoration: underline;
}

.check {
  width: 13px;
  height: 13px;
  flex: none;
  display: block;
  background: #fff;
  border: 1px solid #b0b0b0;
  position: relative;
}
.check.on::after {
  content: "";
  position: absolute;
  left: 3px;
  top: 0;
  width: 5px;
  height: 9px;
  border: solid #000;
  border-width: 0 2px 2px 0;
  transform: rotate(40deg);
}

.sym {
  width: 16px;
  height: 16px;
  flex: none;
  display: flex;
  align-items: center;
  justify-content: center;
}
.sym-line { width: 16px; height: 2px; background: #9ab0a2; display: block; }
.swatch { width: 16px; height: 16px; display: block; border: 1px solid #555; }
.orange { background: #ffa01e; border-color: #8f5c10; }
.green { background: #85b66f; border-color: #4f6f40; }
.brown { background: #8a5230; border-color: #5c3418; }
.red { background: #c33b3b; border-color: #802020; }
.pink { background: #e0558e; border-color: #963060; }
.rose { background: #b8484f; border-color: #7a2830; }
.peach { background: #fdb66e; border-color: #bb8040; }

.funnel {
  position: absolute;
  left: 297px;
  top: 1px;
  width: 16px;
  height: 16px;
}

/* map */
.map-canvas {
  margin-top: 1px;
  background: #fff;
  border: 1px solid #a8a8a8;
  min-height: 0;
}
.map { display: block; width: 100%; height: 100%; }
.land path {
  fill: #85b66f;
  stroke: #3a4036;
  stroke-width: 3.800px;
  stroke-linejoin: round;
}

/* toolbox */
.search-box {
  height: 21px;
  flex: none;
  margin-top: 3px;
  border: 1px solid #0078d7;
  border-radius: 2px;
  background: #fff;
  display: flex;
  align-items: center;
  padding-left: 8px;
}
.search-ic { width: 14px; height: 14px; flex: none; }
.search-text {
  margin-left: 6px;
  padding-left: 1px;
  border-left: 1px solid #000;
  color: #8a8a8a;
  font-style: italic;
  line-height: 14px;
  font-size: 11px;
}

.proc-tree {
  border: 1px solid #a8a8a8;
  border-top: 0;
  background: #fff;
  padding-top: 2px;
  min-height: 0;
}
.proc-tree li { padding-left: 4px; }
.proc-tree .ics { margin-left: 7px; }
.proc-tree li.hover { background: #efefef; }

/* status bar */
.statusbar {
  height: 28px;
  flex: none;
  display: flex;
  align-items: center;
  padding-left: 4px;
  background: #f0f0f0;
  position: relative;
}

.field {
  height: 21px;
  flex: none;
  display: flex;
  align-items: center;
  background: #fff;
  border: 1px solid #c4c4c4;
  border-radius: 2px;
  padding-left: 4px;
  overflow: hidden;
}
.locator { width: 200px; color: #777; padding-left: 7px; letter-spacing: -.4px; }
.locator span { margin-left: 6px; }
.coord { width: 104px; margin-left: 4px; justify-content: center; padding-left: 0; letter-spacing: -.4px; }
.cut { width: 6px; flex: none; color: #333; font-size: 10px; }
.l-coord { margin-left: 44px; }
.st-ic { width: 18px; height: 18px; flex: none; margin-left: 3px; }
.l-scale { margin-left: 12px; }
.scale { width: 507px; margin-left: 3px; padding-right: 0; padding-left: 2px; letter-spacing: -.4px; }
.scale span { flex: 1; }
.combo { width: 19px; height: 100%; flex: none; border-left: 1px solid #c4c4c4; background: #f7f7f7; position: relative; }
.combo i {
  position: absolute;
  left: 5px;
  top: 7px;
  border: 4px solid transparent;
  border-top: 5px solid #555;
  border-bottom: 0;
}
.lock { width: 16px; height: 16px; flex: none; margin-left: 11px; }
.l-mag { margin-left: 4px; }
.spin { padding-right: 0; margin-left: 4px; }
.spin span { flex: 1; padding-left: 2px; }
.mag { width: 84px; margin-left: 3px; }
.rot { width: 83px; margin-left: 8px; }
.l-rot { margin-left: 7px; }
.spin-btn {
  width: 14px;
  height: 100%;
  flex: none;
  border-left: 1px solid #c4c4c4;
  background: #f7f7f7;
  position: relative;
}
.spin-btn i {
  position: absolute;
  left: 2px;
  border: 4px solid transparent;
}
.spin-btn i:first-child { top: 2px; border-top: 0; border-bottom: 5px solid #555; }
.spin-btn i:last-child { bottom: 2px; border-bottom: 0; border-top: 5px solid #555; }
.render-check { margin-left: 8px; }
.render { margin-left: 6px; }
.st-globe { width: 15px; height: 15px; flex: none; margin-left: 16px; }
.epsg { margin-left: 1px; letter-spacing: -.6px; }
.st-msg { width: 20px; height: 20px; flex: none; margin-left: 23px; }
.size-grip {
  position: absolute;
  right: 0;
  bottom: 0;
  width: 10px;
  height: 10px;
  background: radial-gradient(circle, #bbb .7px, transparent 1px) 0 0 / 3px 3px;
}

/* small text inside icons */
.svg-a { font: 11px "Liberation Sans", sans-serif; fill: #444; }
.svg-11 { font: bold 8px "Liberation Sans", sans-serif; fill: #bbb; text-anchor: middle; }
.svg-i { font: italic bold 15px "Liberation Serif", serif; fill: #fff; text-anchor: middle; }
.svg-inf { font: italic bold 17px "Liberation Serif", serif; fill: #fff; text-anchor: middle; }
.svg-sigma { font: bold 28px "Liberation Serif", serif; fill: #9c0f9c; text-anchor: middle; }
.svg-abc { font: bold 9px "Liberation Sans", sans-serif; fill: #222; text-anchor: middle; }
.svg-ab { font: bold 9px "Liberation Sans", sans-serif; fill: #223; text-anchor: middle; }
.svg-abr { font: bold 9px "Liberation Sans", sans-serif; fill: #e02030; text-anchor: middle; }
.svg-abo { font: bold 8px "Liberation Sans", sans-serif; fill: #c4c4c0; text-anchor: middle; }
.svg-help { font: 15px "Liberation Sans", sans-serif; fill: #fff; text-anchor: middle; }
.svg-d { font: 10px "Liberation Serif", serif; fill: #aaa; }
.svg-eps { font: 24px "Liberation Serif", serif; fill: #7a4a9c; }
.svg-gdal { font: bold 8.500px "Liberation Sans", sans-serif; fill: #111; text-anchor: middle; }

.off { fill: #dedede; stroke: #c8c8c8; stroke-width: .8; }
.off2 { fill: #e6e6e2; stroke: #c8c8c4; stroke-width: .8; }
```
